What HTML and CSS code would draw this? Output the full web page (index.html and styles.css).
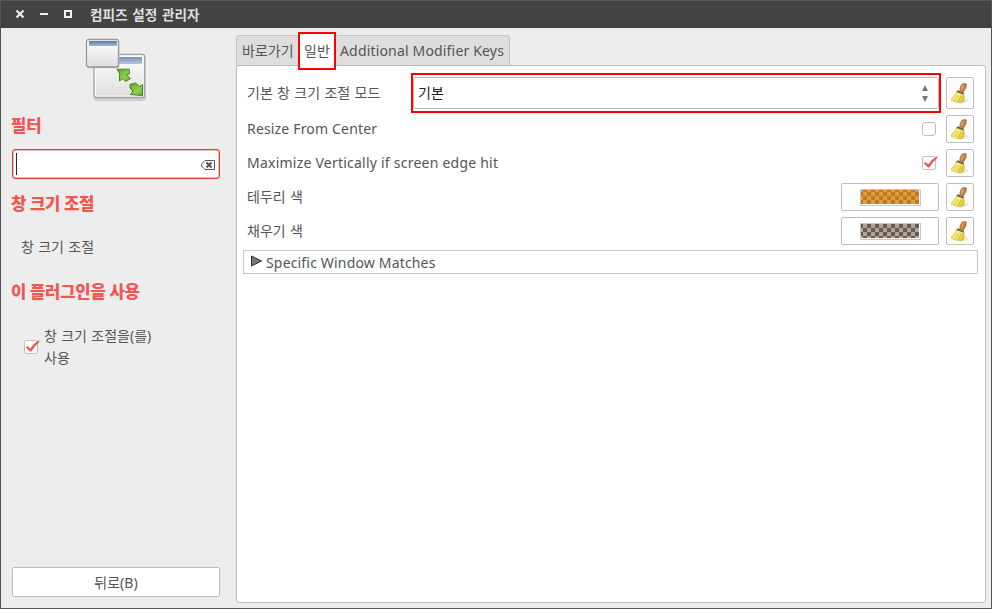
FILE: index.html
```html
<!DOCTYPE html>
<html lang="ko">
<head>
<meta charset="utf-8">
<title>컴피즈 설정 관리자</title>
<link rel="stylesheet" href="styles.css">
</head>
<body>
<svg class="defs" aria-hidden="true">
  <defs>
    <linearGradient id="straw" x1="0" y1="0" x2="1" y2="0.5"><stop offset="0" stop-color="#e3d03c"/><stop offset="0.5" stop-color="#fbf07c"/><stop offset="1" stop-color="#e0c634"/></linearGradient>
    <linearGradient id="pane" x1="0" y1="0" x2="0" y2="1"><stop offset="0" stop-color="#fff"/><stop offset="1" stop-color="#dedede"/></linearGradient>
    <linearGradient id="bar" x1="0" y1="0" x2="0" y2="1"><stop offset="0" stop-color="#5279ae"/><stop offset="1" stop-color="#a9bad4"/></linearGradient>
    <linearGradient id="bar2" x1="0" y1="0" x2="0" y2="1"><stop offset="0" stop-color="#7791b8"/><stop offset="1" stop-color="#b8c5da"/></linearGradient>
    <linearGradient id="leaf" x1="0" y1="0" x2="1" y2="1"><stop offset="0" stop-color="#55a51c"/><stop offset="0.6" stop-color="#93cf57"/><stop offset="1" stop-color="#61ac28"/></linearGradient>
    <symbol id="broom" viewBox="0 0 18 21">
      <ellipse cx="12.5" cy="17.600" rx="4.600" ry="2" fill="#ddd" opacity=".75"/>
      <path d="M10.800 1.300Q13.800-.2 15.300.9L15 4.600 12.500 9 8.700 7.600Q9 4.200 10.800 1.300Z" fill="#c17e3c" stroke="#a0662f" stroke-width=".7"/>
      <path d="M12.300 2 10.600 7" stroke="#e2ad74" stroke-width="1.200" fill="none"/>
      <path d="M5.600 8.300 12.800 11Q14.200 14.600 12 19L9.300 20 6.800 19.300 4.300 19 2.700 18 .6 17.600.5 15.800Q4.300 12.900 5.600 8.300Z" fill="url(#straw)" stroke="#c4aa2c" stroke-width=".6"/>
      <path d="M6.500 12.500Q5.500 15.400 3.500 17.500M9.600 13Q9.200 16 7.300 18.700" stroke="#c2a72a" stroke-width=".6" fill="none"/>
      <path d="M6 8.100 12.800 10.700" stroke="#5c5f58" stroke-width="1.900"/>
    </symbol>
    <symbol id="tick" viewBox="0 0 17 17">
      <rect x="1.500" y="2.500" width="13" height="13" rx="2" fill="#fff" stroke="#bdbdbd"/>
      <path d="M2.800 9.300 4.500 8 7.400 10.600Q10.500 5.400 15.500 2.600L16.800 3.400Q11.400 7.800 8.300 13.600H6.900Z" fill="#f0544f"/>
    </symbol>
  </defs>
</svg>
<div class="window">
  <header class="titlebar">
    <svg class="controls" width="62" height="12" viewBox="0 0 62 12">
      <path d="M1.500 1.500 8.500 8.500M8.500 1.500 1.500 8.500" stroke="#eee" stroke-width="2.200"/>
      <path d="M25 5H33" stroke="#eee" stroke-width="2"/>
      <rect x="50" y="2" width="6" height="6" fill="none" stroke="#eee" stroke-width="2"/>
    </svg>
    <h1>컴피즈 설정 관리자</h1>
  </header>
  <div class="body">
    <aside class="sidebar">
      <svg class="logo" width="64" height="66" viewBox="0 0 64 66">
        <rect x="9" y="17" width="52" height="46" rx="3" fill="#cfcfcf"/>
        <rect x="9" y="16.500" width="50.500" height="43" rx="2" fill="url(#pane)" stroke="#a2a2a2" stroke-width="1.300"/>
        <rect x="12" y="19" width="45" height="7" fill="url(#bar2)"/>
        <path d="M10.500 18H58V58H10.500Z" fill="none" stroke="#fff" opacity=".8"/>
        <rect x="1.800" y="1.800" width="32.500" height="28.500" rx="2.500" fill="#c5c5c5"/>
        <rect x="1.500" y="1.500" width="32" height="27.500" rx="2" fill="url(#pane)" stroke="#989898" stroke-width="1.300"/>
        <rect x="4" y="3" width="28" height="5" fill="url(#bar)"/>
        <path d="M32 31.200H44.300V36L41.300 37 45.500 40.500 40.600 43.500 38 40.500 34.500 43V35.500Z" fill="url(#leaf)" stroke="#438416"/>
        <path d="M57.500 57.500V46.500L54.500 48.500 50.500 45 45 46.500V50L48 53 45.500 56.500Z" fill="url(#leaf)" stroke="#438416"/>
      </svg>
      <h2>필터</h2>
      <div class="search">
        <span class="caret"></span>
        <svg width="16" height="12" viewBox="0 0 16 12">
          <path d="M5 1.500H14.500V10.500H5L1.500 7V5Z" fill="none" stroke="#555"/>
          <path d="M6.500 3.500 11.500 8.500M11.500 3.500 6.500 8.500" stroke="#555" stroke-width="2"/>
        </svg>
      </div>
      <h2 class="h-plugin">창 크기 조절</h2>
      <p class="desc">창 크기 조절</p>
      <h2 class="h-use">이 플러그인을 사용</h2>
      <label class="enable"><svg width="17" height="17"><use href="#tick"/></svg><span>창 크기 조절을(를)<br>사용</span></label>
      <button class="back">뒤로(B)</button>
    </aside>
    <main class="content">
      <nav class="tabs">
        <span class="tab first">바로가기</span>
        <span class="tab active">일반</span>
        <span class="tab last">Additional Modifier Keys</span>
      </nav>
      <section class="panel">
        <div class="row tall">
          <span class="label">기본 창 크기 조절 모드</span>
          <div class="highlight"><div class="combo"><span>기본</span>
            <svg width="8" height="18" viewBox="0 0 8 18"><path d="M4 1 7 7H1ZM4 18 7 12H1Z" fill="#777"/></svg></div></div>
          <button class="reset"><svg width="18" height="21"><use href="#broom"/></svg></button>
        </div>
        <div class="row">
          <span class="label latin">Resize From Center</span>
          <span class="checkbox"></span>
          <button class="reset"><svg width="18" height="21"><use href="#broom"/></svg></button>
        </div>
        <div class="row">
          <span class="label latin wide">Maximize Vertically if screen edge hit</span>
          <svg class="check" width="17" height="17"><use href="#tick"/></svg>
          <button class="reset"><svg width="18" height="21"><use href="#broom"/></svg></button>
        </div>
        <div class="row">
          <span class="label">테두리 색</span>
          <button class="color"><span class="swatch orange"></span></button>
          <button class="reset"><svg width="18" height="21"><use href="#broom"/></svg></button>
        </div>
        <div class="row">
          <span class="label">채우기 색</span>
          <button class="color"><span class="swatch brown"></span></button>
          <button class="reset"><svg width="18" height="21"><use href="#broom"/></svg></button>
        </div>
        <div class="expander">
          <svg width="13" height="13" viewBox="0 0 13 13"><path d="M1.500 1 11.500 6 1.500 11Z" fill="#777" stroke="#333"/></svg>
          <span class="latin">Specific Window Matches</span>
        </div>
      </section>
    </main>
  </div>
</div>
</body>
</html>
```
FILE: styles.css
```css
* { box-sizing: border-box; }
body {
  margin: 0;
  font: 14px/20px "Noto Sans", "Noto Sans CJK KR", sans-serif;
  color: #555;
  word-spacing: 0.7px;
}
svg { display: block; flex: none; }
h1, h2, p { margin: 0; }
button {
  display: flex;
  align-items: center;
  justify-content: center;
  padding: 0;
  border: 1px solid #bdbdbd;
  border-radius: 2px;
  background: #fff;
  font: inherit;
  color: inherit;
}
.defs { position: absolute; width: 0; height: 0; }
.window {
  display: flex;
  flex-direction: column;
  width: 992px;
  height: 609px;
  border: 1px solid #555;
  border-top: 0;
  background: #ededed;
}
.titlebar {
  display: flex;
  align-items: center;
  height: 28px;
  padding-left: 14px;
  border-top: 1px solid #575757;
  background: #434343;
}
.controls { margin-right: 13px; }
.titlebar h1 {
  color: #dedede;
  font-size: 13.6px;
  font-weight: 700;
  line-height: 20px;
  word-spacing: 1.2px;
}
.body { display: flex; flex: 1; }
.sidebar {
  display: flex;
  flex-direction: column;
  width: 219px;
  margin-right: 16px;
  padding: 10px 0 11px 11px;
}
.logo { margin: 0 0 10px 73px; }
h2 {
  height: 24px;
  margin-left: -1px;
  color: #f4554f;
  font-size: 16.7px;
  font-weight: 900;
  line-height: 24px;
  letter-spacing: -0.2px;
  word-spacing: -0.4px;
}
.search {
  display: flex;
  align-items: center;
  justify-content: space-between;
  height: 30px;
  margin-top: 11px;
  padding: 0 3px;
  border: 1px solid #dc3c32;
  border-radius: 3px;
  background: #fff;
  box-shadow: inset 0 0 0 1px #f5b8b3;
}
.search svg { margin-top: 1px; }
.caret { width: 1px; height: 22px; background: #222; }
.h-plugin { margin-top: 13px; }
.desc { margin: 21px 0 0 9px; }
.h-use { margin-top: 23px; }
.enable {
  display: flex;
  align-items: center;
  gap: 4px;
  margin: 21px 0 0 11px;
  line-height: 22px;
}
.enable svg { margin-top: -2px; }
.back { height: 30px; margin-top: auto; padding-top: 1px; }
.content { display: flex; flex: 1; flex-direction: column; padding: 7px 5px 5px 0; }
.tabs { display: flex; height: 30px; }
.tab {
  height: 31px;
  padding-top: 5px;
  border: 1px solid #c6c6c6;
  background: #ddd;
}
.tab.first { width: 62px; padding-left: 5px; border-right: 0; border-radius: 3px 0 0; }
.tab.active {
  width: 38px;
  height: 38px;
  margin-top: -3px;
  padding: 7px 0 0 4px;
  border: 2px solid #f00;
  background: #fff;
  z-index: 1;
}
.tab.last {
  width: 174px;
  padding-left: 4px;
  border-left: 0;
  border-radius: 0 3px 0 0;
  letter-spacing: 0.17px;
  word-spacing: 0;
  white-space: nowrap;
}
.panel {
  display: flex;
  flex: 1;
  flex-direction: column;
  gap: 6px;
  padding: 11px 7px 0 6px;
  border: 1px solid #bdbdbd;
  border-radius: 0 3px 3px 3px;
  background: #fff;
}
.row { display: flex; align-items: center; height: 28px; padding: 0 4px; }
.row.tall { height: 32px; }
.label { flex: 1; }
.latin { letter-spacing: 0.17px; word-spacing: 0; }
.latin.wide { letter-spacing: 0.23px; }
.highlight {
  width: 530px;
  height: 40px;
  margin-right: 5px;
  padding: 2px 0;
  border: 2px solid #f00;
}
.combo {
  display: flex;
  align-items: center;
  justify-content: space-between;
  height: 32px;
  padding: 0 9px 0 4px;
  border: 1px solid #bdbdbd;
  border-radius: 3px;
  color: #222;
}
.reset { width: 28px; height: 100%; }
.checkbox {
  width: 14px;
  height: 14px;
  margin-right: 10px;
  border: 1px solid #bdbdbd;
  border-radius: 3px;
}
.check { margin: -2px 8px 0 0; }
.color { width: 98px; height: 28px; margin-right: 7px; }
.swatch {
  width: 61px;
  height: 17px;
  padding: 0 1px 1px 0;
  border: 1px solid #c8c8c8;
  background-clip: content-box;
  background-origin: content-box;
  background-size: 8px 8px;
}
.orange {
  background-image: conic-gradient(#e09a41 25%, #c07820 0 50%, #e09a41 0 75%, #c07820 0);
  background-position: -2px 2px;
}
.brown {
  background-image: conic-gradient(#b0a59b 25%, #6b5c50 0 50%, #b0a59b 0 75%, #6b5c50 0);
  background-position: -2px 0;
}
.expander {
  display: flex;
  align-items: center;
  gap: 3px;
  height: 24px;
  margin-top: -1px;
  padding-left: 6px;
  border: 1px solid #c6c6c6;
}
.expander span { padding-top: 2px; }
.expander svg { margin-top: -1px; }
```
